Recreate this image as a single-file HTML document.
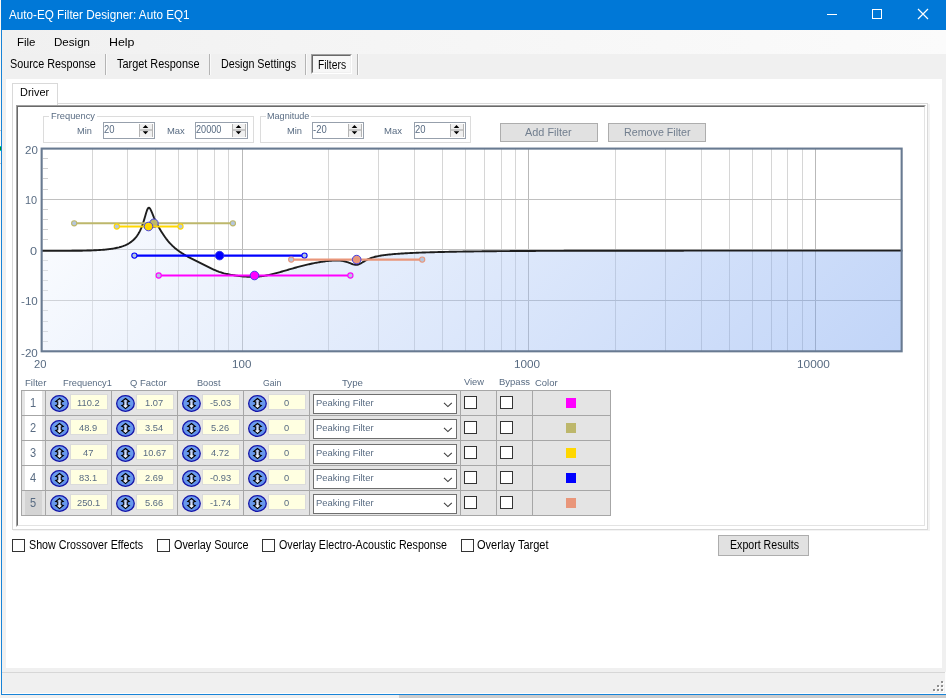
<!DOCTYPE html>
<html><head><meta charset='utf-8'><title>Auto-EQ Filter Designer</title>
<style>
html,body{margin:0;padding:0;width:946px;height:698px;overflow:hidden;background:#f0f0f0;font-family:"Liberation Sans", sans-serif;}
.abs{position:absolute;}
.t{position:absolute;white-space:nowrap;line-height:1;transform-origin:0 0;}
</style></head><body>
<svg width='0' height='0' style='position:absolute'><defs>
<linearGradient id='arw' x1='0' y1='0' x2='0' y2='1'><stop offset='0' stop-color='#9db8f2'/><stop offset='1' stop-color='#ffffff'/></linearGradient>
<linearGradient id='ball' x1='0' y1='0' x2='0' y2='1'><stop offset='0' stop-color='#6fa0f0'/><stop offset='1' stop-color='#5f8fe8'/></linearGradient>
<g id='spin'><ellipse cx='0' cy='0' rx='8.8' ry='7.9' fill='url(#ball)' stroke='#1414a8' stroke-width='1.3'/>
<path d='M0.05 -5.0 L3.8 -2.0 L1.8 -1.5 L1.8 1.4 L3.8 1.9 L0.05 5.1 L-3.7 1.9 L-1.7 1.4 L-1.7 -1.5 L-3.7 -2.0 Z' fill='url(#arw)' stroke='#000' stroke-width='1.1' stroke-linejoin='miter'/></g>
</defs></svg>

<!-- outside / window frame -->
<div class='abs' style='left:0;top:0;width:1px;height:695px;background:#fbf8f3'></div>
<div class='abs' style='left:0;top:146px;width:1px;height:5px;background:#00d8b0'></div><div class='abs' style='left:0;top:147px;width:1px;height:3px;background:#008a1e'></div><div class='abs' style='left:0;top:130px;width:1px;height:1px;background:#c4c4c4'></div><div class='abs' style='left:0;top:163px;width:1px;height:1px;background:#c4c4c4'></div>
<div class='abs' style='left:0;top:695px;width:399px;height:3px;background:#f0f0f0'></div>
<div class='abs' style='left:399px;top:695px;width:547px;height:3px;background:#cccccc'></div>
<div class='abs' style='left:1px;top:0;width:1px;height:695px;background:#1883d7'></div>
<div class='abs' style='left:1px;top:694px;width:945px;height:1px;background:#1883d7'></div>
<div class='abs' style='left:2px;top:693px;width:944px;height:1px;background:#fdfdfd'></div>
<!-- title bar -->
<div class='abs' style='left:1px;top:0;width:945px;height:30px;background:#0078d7'></div>
<div class='abs' style='left:827px;top:14px;width:10px;height:1px;background:#fff'></div>
<div class='abs' style='left:872px;top:9px;width:8px;height:8px;border:1px solid #fff'></div>
<svg class='abs' style='left:917px;top:8px' width='12' height='12' viewBox='0 0 12 12'><path d='M1 1 L11 11 M11 1 L1 11' stroke='#fff' stroke-width='1.2' fill='none'/></svg>
<!-- menu bar -->
<div class='abs' style='left:2px;top:30px;width:944px;height:24px;background:linear-gradient(to right,#f0f0f0 0%,#f4f4f4 30%,#fbfbfb 100%)'></div>
<!-- toolbar -->
<div class='abs' style='left:105px;top:54px;width:1px;height:21px;background:#b4b4b4'></div><div class='abs' style='left:106px;top:54px;width:1px;height:21px;background:#fafafa'></div>
<div class='abs' style='left:209px;top:54px;width:1px;height:21px;background:#b4b4b4'></div><div class='abs' style='left:210px;top:54px;width:1px;height:21px;background:#fafafa'></div>
<div class='abs' style='left:305px;top:54px;width:1px;height:21px;background:#b4b4b4'></div><div class='abs' style='left:306px;top:54px;width:1px;height:21px;background:#fafafa'></div>
<div class='abs' style='left:357px;top:54px;width:1px;height:21px;background:#b4b4b4'></div><div class='abs' style='left:358px;top:54px;width:1px;height:21px;background:#fafafa'></div>
<div class='abs' style='left:311px;top:54px;width:41px;height:20px;background:#f7f7f7;box-sizing:border-box;border-top:1px solid #a0a0a0;border-left:1px solid #a0a0a0;border-right:1px solid #fff;border-bottom:1px solid #fff'></div><div class='abs' style='left:312px;top:55px;width:39px;height:18px;box-sizing:border-box;border-top:1px solid #696969;border-left:1px solid #696969;border-right:1px solid #f0f0f0;border-bottom:1px solid #f0f0f0'></div>
<!-- white client -->
<div class='abs' style='left:6px;top:79px;width:936px;height:589px;background:#fff'></div>
<!-- tab page border -->
<div class='abs' style='left:13px;top:104px;width:915px;height:426px;border-right:2px solid #f3f3f3;border-bottom:1px solid #f3f3f3'></div><div class='abs' style='left:12px;top:103px;width:914px;height:425px;border:1px solid #d9d9d9'></div>
<div class='abs' style='left:12px;top:83px;width:44px;height:21px;background:#fff;border:1px solid #d9d9d9;border-bottom:none'></div>
<!-- inner sunken panel -->
<div class='abs' style='left:16px;top:105px;width:910px;height:422px;box-sizing:border-box;border-top:1px solid #a0a0a0;border-left:1px solid #a0a0a0;border-right:1px solid #fff;border-bottom:1px solid #fff'></div>
<div class='abs' style='left:17px;top:106px;width:908px;height:420px;box-sizing:border-box;border-top:1px solid #696969;border-left:1px solid #696969;border-right:1px solid #e3e3e3;border-bottom:1px solid #e3e3e3'></div>
<!-- group boxes -->
<div class='abs' style='left:43px;top:116px;width:209px;height:25px;border:1px solid #dcdcdc'></div>
<div class='abs' style='left:49px;top:112px;width:48px;height:10px;background:#fff'></div>
<div class='abs' style='left:260px;top:116px;width:209px;height:25px;border:1px solid #dcdcdc'></div>
<div class='abs' style='left:266px;top:112px;width:45px;height:10px;background:#fff'></div>
<div class='abs' style='left:103px;top:122px;width:50px;height:15px;background:#fff;border:1px solid #97a0ac'></div>
<div class='abs' style='left:139px;top:124px;width:14px;height:13px;background:#f0f0f0;border-left:1px solid #b4b4b4;border-right:1px solid #b4b4b4;box-sizing:border-box'></div>
<div class='abs' style='left:140px;top:129px;width:12px;height:2px;background:#c8c8c8'></div>
<svg class='abs' style='left:139px;top:124px' width='14' height='13' viewBox='0 0 14 13'><path d='M3.7 4 L9.3 4 L6.5 0.9 Z M3.7 7.2 L9.3 7.2 L6.5 10.2 Z' fill='#000'/></svg><div class='abs' style='left:195px;top:122px;width:51px;height:15px;background:#fff;border:1px solid #97a0ac'></div>
<div class='abs' style='left:232px;top:124px;width:14px;height:13px;background:#f0f0f0;border-left:1px solid #b4b4b4;border-right:1px solid #b4b4b4;box-sizing:border-box'></div>
<div class='abs' style='left:233px;top:129px;width:12px;height:2px;background:#c8c8c8'></div>
<svg class='abs' style='left:232px;top:124px' width='14' height='13' viewBox='0 0 14 13'><path d='M3.7 4 L9.3 4 L6.5 0.9 Z M3.7 7.2 L9.3 7.2 L6.5 10.2 Z' fill='#000'/></svg><div class='abs' style='left:312px;top:122px;width:50px;height:15px;background:#fff;border:1px solid #97a0ac'></div>
<div class='abs' style='left:348px;top:124px;width:14px;height:13px;background:#f0f0f0;border-left:1px solid #b4b4b4;border-right:1px solid #b4b4b4;box-sizing:border-box'></div>
<div class='abs' style='left:349px;top:129px;width:12px;height:2px;background:#c8c8c8'></div>
<svg class='abs' style='left:348px;top:124px' width='14' height='13' viewBox='0 0 14 13'><path d='M3.7 4 L9.3 4 L6.5 0.9 Z M3.7 7.2 L9.3 7.2 L6.5 10.2 Z' fill='#000'/></svg><div class='abs' style='left:414px;top:122px;width:50px;height:15px;background:#fff;border:1px solid #97a0ac'></div>
<div class='abs' style='left:450px;top:124px;width:14px;height:13px;background:#f0f0f0;border-left:1px solid #b4b4b4;border-right:1px solid #b4b4b4;box-sizing:border-box'></div>
<div class='abs' style='left:451px;top:129px;width:12px;height:2px;background:#c8c8c8'></div>
<svg class='abs' style='left:450px;top:124px' width='14' height='13' viewBox='0 0 14 13'><path d='M3.7 4 L9.3 4 L6.5 0.9 Z M3.7 7.2 L9.3 7.2 L6.5 10.2 Z' fill='#000'/></svg>
<!-- buttons -->
<div class='abs' style='left:500px;top:123px;width:96px;height:17px;background:#e1e1e1;border:1px solid #adadad'></div>
<div class='abs' style='left:608px;top:123px;width:96px;height:17px;background:#e1e1e1;border:1px solid #adadad'></div>
<svg class='abs' style='left:0;top:0' width='946' height='698' viewBox='0 0 946 698'>
<defs><linearGradient id='ag' gradientUnits='userSpaceOnUse' x1='41.65' y1='149.0' x2='572.85' y2='680.2'>
<stop offset='0' stop-color='#ffffff' stop-opacity='0.4'/><stop offset='1' stop-color='#6495ed' stop-opacity='0.4'/></linearGradient></defs>
<rect x='41.65' y='149.0' width='860.4' height='202.0' fill='#fff'/>
<line x1='92.5' y1='149.0' x2='92.5' y2='351.0' stroke='#d6d6d6' stroke-width='1'/><line x1='127.5' y1='149.0' x2='127.5' y2='351.0' stroke='#d6d6d6' stroke-width='1'/><line x1='155.5' y1='149.0' x2='155.5' y2='351.0' stroke='#d6d6d6' stroke-width='1'/><line x1='178.5' y1='149.0' x2='178.5' y2='351.0' stroke='#d6d6d6' stroke-width='1'/><line x1='197.5' y1='149.0' x2='197.5' y2='351.0' stroke='#d6d6d6' stroke-width='1'/><line x1='214.5' y1='149.0' x2='214.5' y2='351.0' stroke='#d6d6d6' stroke-width='1'/><line x1='228.5' y1='149.0' x2='228.5' y2='351.0' stroke='#d6d6d6' stroke-width='1'/><line x1='242.5' y1='149.0' x2='242.5' y2='351.0' stroke='#b9b9b9' stroke-width='1'/><line x1='328.5' y1='149.0' x2='328.5' y2='351.0' stroke='#d6d6d6' stroke-width='1'/><line x1='378.5' y1='149.0' x2='378.5' y2='351.0' stroke='#d6d6d6' stroke-width='1'/><line x1='414.5' y1='149.0' x2='414.5' y2='351.0' stroke='#d6d6d6' stroke-width='1'/><line x1='442.5' y1='149.0' x2='442.5' y2='351.0' stroke='#d6d6d6' stroke-width='1'/><line x1='465.5' y1='149.0' x2='465.5' y2='351.0' stroke='#d6d6d6' stroke-width='1'/><line x1='484.5' y1='149.0' x2='484.5' y2='351.0' stroke='#d6d6d6' stroke-width='1'/><line x1='501.5' y1='149.0' x2='501.5' y2='351.0' stroke='#d6d6d6' stroke-width='1'/><line x1='515.5' y1='149.0' x2='515.5' y2='351.0' stroke='#d6d6d6' stroke-width='1'/><line x1='528.5' y1='149.0' x2='528.5' y2='351.0' stroke='#b9b9b9' stroke-width='1'/><line x1='615.5' y1='149.0' x2='615.5' y2='351.0' stroke='#d6d6d6' stroke-width='1'/><line x1='665.5' y1='149.0' x2='665.5' y2='351.0' stroke='#d6d6d6' stroke-width='1'/><line x1='701.5' y1='149.0' x2='701.5' y2='351.0' stroke='#d6d6d6' stroke-width='1'/><line x1='729.5' y1='149.0' x2='729.5' y2='351.0' stroke='#d6d6d6' stroke-width='1'/><line x1='752.5' y1='149.0' x2='752.5' y2='351.0' stroke='#d6d6d6' stroke-width='1'/><line x1='771.5' y1='149.0' x2='771.5' y2='351.0' stroke='#d6d6d6' stroke-width='1'/><line x1='787.5' y1='149.0' x2='787.5' y2='351.0' stroke='#d6d6d6' stroke-width='1'/><line x1='802.5' y1='149.0' x2='802.5' y2='351.0' stroke='#d6d6d6' stroke-width='1'/><line x1='815.5' y1='149.0' x2='815.5' y2='351.0' stroke='#b9b9b9' stroke-width='1'/><line x1='41.65' y1='199.5' x2='902.05' y2='199.5' stroke='#c0c0c0' stroke-width='1'/><line x1='41.65' y1='249.5' x2='902.05' y2='249.5' stroke='#c0c0c0' stroke-width='1'/><line x1='41.65' y1='300.5' x2='902.05' y2='300.5' stroke='#c0c0c0' stroke-width='1'/><line x1='43' y1='158.5' x2='48' y2='158.5' stroke='#d0d0d0' stroke-width='1'/><line x1='43' y1='168.5' x2='48' y2='168.5' stroke='#d0d0d0' stroke-width='1'/><line x1='43' y1='178.5' x2='48' y2='178.5' stroke='#d0d0d0' stroke-width='1'/><line x1='43' y1='189.5' x2='48' y2='189.5' stroke='#d0d0d0' stroke-width='1'/><line x1='43' y1='209.5' x2='48' y2='209.5' stroke='#d0d0d0' stroke-width='1'/><line x1='43' y1='219.5' x2='48' y2='219.5' stroke='#d0d0d0' stroke-width='1'/><line x1='43' y1='229.5' x2='48' y2='229.5' stroke='#d0d0d0' stroke-width='1'/><line x1='43' y1='239.5' x2='48' y2='239.5' stroke='#d0d0d0' stroke-width='1'/><line x1='43' y1='260.5' x2='48' y2='260.5' stroke='#d0d0d0' stroke-width='1'/><line x1='43' y1='270.5' x2='48' y2='270.5' stroke='#d0d0d0' stroke-width='1'/><line x1='43' y1='280.5' x2='48' y2='280.5' stroke='#d0d0d0' stroke-width='1'/><line x1='43' y1='290.5' x2='48' y2='290.5' stroke='#d0d0d0' stroke-width='1'/><line x1='43' y1='310.5' x2='48' y2='310.5' stroke='#d0d0d0' stroke-width='1'/><line x1='43' y1='321.5' x2='48' y2='321.5' stroke='#d0d0d0' stroke-width='1'/><line x1='43' y1='331.5' x2='48' y2='331.5' stroke='#d0d0d0' stroke-width='1'/><line x1='43' y1='341.5' x2='48' y2='341.5' stroke='#d0d0d0' stroke-width='1'/>
<path d='M42.0,250.90 L43.1,250.90 L44.1,250.90 L45.1,250.90 L46.1,250.90 L47.1,250.90 L48.1,250.90 L49.1,250.90 L50.1,250.90 L51.1,250.90 L52.1,250.90 L53.1,250.90 L54.1,250.90 L55.1,250.90 L56.1,250.90 L57.1,250.90 L58.1,250.89 L59.1,250.89 L60.1,250.89 L61.1,250.89 L62.1,250.88 L63.1,250.88 L64.1,250.87 L65.1,250.87 L66.1,250.86 L67.1,250.86 L68.1,250.85 L69.1,250.84 L70.1,250.84 L71.1,250.83 L72.1,250.82 L73.1,250.81 L74.1,250.80 L75.1,250.79 L76.1,250.77 L77.1,250.76 L78.1,250.75 L79.1,250.73 L80.1,250.72 L81.1,250.70 L82.1,250.68 L83.1,250.66 L84.1,250.64 L85.1,250.61 L86.1,250.59 L87.1,250.56 L88.1,250.53 L89.1,250.50 L90.1,250.47 L91.1,250.43 L92.1,250.40 L93.1,250.36 L94.1,250.31 L95.1,250.27 L96.1,250.22 L97.1,250.16 L98.1,250.11 L99.1,250.05 L100.1,249.98 L101.1,249.91 L102.1,249.84 L103.1,249.76 L104.1,249.68 L105.1,249.58 L106.1,249.49 L107.1,249.38 L108.1,249.27 L109.1,249.15 L110.1,249.02 L111.1,248.88 L112.1,248.73 L113.1,248.57 L114.1,248.40 L115.1,248.21 L116.1,248.01 L117.1,247.79 L118.1,247.56 L119.1,247.31 L120.1,247.03 L121.1,246.74 L122.1,246.42 L123.1,246.07 L124.1,245.69 L125.1,245.28 L126.1,244.83 L127.1,244.34 L128.1,243.81 L129.1,243.23 L130.1,242.59 L131.1,241.88 L132.1,241.11 L133.1,240.25 L134.1,239.31 L135.1,238.25 L136.1,237.07 L137.1,235.75 L138.1,234.26 L139.1,232.57 L140.1,230.65 L141.1,228.45 L142.1,225.93 L143.1,223.07 L144.1,219.87 L145.1,216.43 L146.1,212.98 L147.1,210.00 L148.1,208.06 L149.1,207.61 L150.1,208.60 L151.1,210.56 L152.1,212.97 L153.1,215.46 L154.1,217.84 L155.1,220.07 L156.1,222.16 L157.1,224.12 L158.1,225.98 L159.1,227.77 L160.1,229.49 L161.1,231.15 L162.1,232.75 L163.1,234.30 L164.1,235.78 L165.1,237.20 L166.1,238.56 L167.1,239.85 L168.1,241.09 L169.1,242.26 L170.1,243.38 L171.1,244.44 L172.1,245.45 L173.1,246.41 L174.1,247.32 L175.1,248.19 L176.1,249.01 L177.1,249.81 L178.1,250.56 L179.1,251.29 L180.1,251.99 L181.1,252.66 L182.1,253.31 L183.1,253.93 L184.1,254.54 L185.1,255.13 L186.1,255.71 L187.1,256.27 L188.1,256.82 L189.1,257.36 L190.1,257.89 L191.1,258.41 L192.1,258.93 L193.1,259.45 L194.1,259.95 L195.1,260.46 L196.1,260.96 L197.1,261.46 L198.1,261.96 L199.1,262.46 L200.1,262.96 L201.1,263.46 L202.1,263.96 L203.1,264.46 L204.1,264.96 L205.1,265.46 L206.1,265.96 L207.1,266.46 L208.1,266.95 L209.1,267.44 L210.1,267.93 L211.1,268.41 L212.1,268.87 L213.1,269.33 L214.1,269.78 L215.1,270.21 L216.1,270.63 L217.1,271.03 L218.1,271.41 L219.1,271.78 L220.1,272.12 L221.1,272.45 L222.1,272.76 L223.1,273.04 L224.1,273.32 L225.1,273.57 L226.1,273.81 L227.1,274.03 L228.1,274.24 L229.1,274.44 L230.1,274.63 L231.1,274.81 L232.1,274.99 L233.1,275.15 L234.1,275.31 L235.1,275.46 L236.1,275.60 L237.1,275.74 L238.1,275.88 L239.1,276.00 L240.1,276.12 L241.1,276.23 L242.1,276.34 L243.1,276.44 L244.1,276.52 L245.1,276.60 L246.1,276.67 L247.1,276.73 L248.1,276.78 L249.1,276.82 L250.1,276.84 L251.1,276.85 L252.1,276.86 L253.1,276.84 L254.1,276.82 L255.1,276.78 L256.1,276.73 L257.1,276.66 L258.2,276.58 L259.2,276.49 L260.2,276.38 L261.2,276.26 L262.2,276.13 L263.2,275.99 L264.2,275.83 L265.2,275.66 L266.2,275.48 L267.2,275.29 L268.2,275.09 L269.2,274.88 L270.2,274.66 L271.2,274.43 L272.2,274.19 L273.2,273.94 L274.2,273.69 L275.2,273.43 L276.2,273.17 L277.2,272.90 L278.2,272.63 L279.2,272.35 L280.2,272.07 L281.2,271.78 L282.2,271.50 L283.2,271.21 L284.2,270.92 L285.2,270.63 L286.2,270.34 L287.2,270.05 L288.2,269.76 L289.2,269.46 L290.2,269.18 L291.2,268.89 L292.2,268.60 L293.2,268.32 L294.2,268.03 L295.2,267.75 L296.2,267.48 L297.2,267.20 L298.2,266.93 L299.2,266.66 L300.2,266.40 L301.2,266.14 L302.2,265.88 L303.2,265.63 L304.2,265.38 L305.2,265.13 L306.2,264.89 L307.2,264.66 L308.2,264.43 L309.2,264.20 L310.2,263.98 L311.2,263.76 L312.2,263.55 L313.2,263.34 L314.2,263.14 L315.2,262.94 L316.2,262.75 L317.2,262.57 L318.2,262.39 L319.2,262.21 L320.2,262.05 L321.2,261.88 L322.2,261.73 L323.2,261.58 L324.2,261.44 L325.2,261.31 L326.2,261.18 L327.2,261.07 L328.2,260.96 L329.2,260.86 L330.2,260.77 L331.2,260.69 L332.2,260.63 L333.2,260.57 L334.2,260.53 L335.2,260.51 L336.2,260.50 L337.2,260.51 L338.2,260.54 L339.2,260.59 L340.2,260.67 L341.2,260.77 L342.2,260.90 L343.2,261.07 L344.2,261.27 L345.2,261.51 L346.2,261.78 L347.2,262.10 L348.2,262.45 L349.2,262.83 L350.2,263.23 L351.2,263.63 L352.2,264.02 L353.2,264.37 L354.2,264.64 L355.2,264.81 L356.2,264.85 L357.2,264.75 L358.2,264.51 L359.2,264.14 L360.2,263.67 L361.2,263.12 L362.2,262.54 L363.2,261.93 L364.2,261.33 L365.2,260.75 L366.2,260.20 L367.2,259.68 L368.2,259.20 L369.2,258.76 L370.2,258.35 L371.2,257.98 L372.2,257.64 L373.2,257.33 L374.2,257.04 L375.2,256.78 L376.2,256.54 L377.2,256.31 L378.2,256.10 L379.2,255.91 L380.2,255.73 L381.2,255.56 L382.2,255.41 L383.2,255.26 L384.2,255.12 L385.2,254.99 L386.2,254.87 L387.2,254.75 L388.2,254.64 L389.2,254.53 L390.2,254.43 L391.2,254.33 L392.2,254.24 L393.2,254.15 L394.2,254.07 L395.2,253.99 L396.2,253.91 L397.2,253.84 L398.2,253.76 L399.2,253.70 L400.2,253.63 L401.2,253.56 L402.2,253.50 L403.2,253.44 L404.2,253.38 L405.2,253.32 L406.2,253.27 L407.2,253.21 L408.2,253.16 L409.2,253.11 L410.2,253.06 L411.2,253.01 L412.2,252.97 L413.2,252.92 L414.2,252.88 L415.2,252.83 L416.2,252.79 L417.2,252.75 L418.2,252.71 L419.2,252.67 L420.2,252.63 L421.2,252.60 L422.2,252.56 L423.2,252.52 L424.2,252.49 L425.2,252.46 L426.2,252.42 L427.2,252.39 L428.2,252.36 L429.2,252.33 L430.2,252.30 L431.2,252.27 L432.2,252.24 L433.2,252.21 L434.2,252.18 L435.2,252.15 L436.2,252.13 L437.2,252.10 L438.2,252.07 L439.2,252.05 L440.2,252.02 L441.2,252.00 L442.2,251.98 L443.2,251.95 L444.2,251.93 L445.2,251.91 L446.2,251.89 L447.2,251.86 L448.2,251.84 L449.2,251.82 L450.2,251.80 L451.2,251.78 L452.2,251.76 L453.2,251.74 L454.2,251.73 L455.2,251.71 L456.2,251.69 L457.2,251.67 L458.2,251.65 L459.2,251.64 L460.2,251.62 L461.2,251.60 L462.2,251.59 L463.2,251.57 L464.2,251.56 L465.2,251.54 L466.2,251.52 L467.2,251.51 L468.2,251.50 L469.2,251.48 L470.2,251.47 L471.2,251.45 L472.2,251.44 L473.3,251.43 L474.3,251.41 L475.3,251.40 L476.3,251.39 L477.3,251.38 L478.3,251.36 L479.3,251.35 L480.3,251.34 L481.3,251.33 L482.3,251.32 L483.3,251.31 L484.3,251.30 L485.3,251.28 L486.3,251.27 L487.3,251.26 L488.3,251.25 L489.3,251.24 L490.3,251.23 L491.3,251.22 L492.3,251.21 L493.3,251.21 L494.3,251.20 L495.3,251.19 L496.3,251.18 L497.3,251.17 L498.3,251.16 L499.3,251.15 L500.3,251.14 L501.3,251.14 L502.3,251.13 L503.3,251.12 L504.3,251.11 L505.3,251.11 L506.3,251.10 L507.3,251.09 L508.3,251.08 L509.3,251.08 L510.3,251.07 L511.3,251.06 L512.3,251.06 L513.3,251.05 L514.3,251.04 L515.3,251.04 L516.3,251.03 L517.3,251.02 L518.3,251.02 L519.3,251.01 L520.3,251.01 L521.3,251.00 L522.3,250.99 L523.3,250.99 L524.3,250.98 L525.3,250.98 L526.3,250.97 L527.3,250.97 L528.3,250.96 L529.3,250.96 L530.3,250.95 L531.3,250.95 L532.3,250.94 L533.3,250.94 L534.3,250.93 L535.3,250.93 L536.3,250.92 L537.3,250.92 L538.3,250.91 L539.3,250.91 L540.3,250.91 L541.3,250.90 L542.3,250.90 L543.3,250.89 L544.3,250.89 L545.3,250.89 L546.3,250.88 L547.3,250.88 L548.3,250.87 L549.3,250.87 L550.3,250.87 L551.3,250.86 L552.3,250.86 L553.3,250.86 L554.3,250.85 L555.3,250.85 L556.3,250.85 L557.3,250.84 L558.3,250.84 L559.3,250.84 L560.3,250.83 L561.3,250.83 L562.3,250.83 L563.3,250.83 L564.3,250.82 L565.3,250.82 L566.3,250.82 L567.3,250.82 L568.3,250.81 L569.3,250.81 L570.3,250.81 L571.3,250.80 L572.3,250.80 L573.3,250.80 L574.3,250.80 L575.3,250.79 L576.3,250.79 L577.3,250.79 L578.3,250.79 L579.3,250.79 L580.3,250.78 L581.3,250.78 L582.3,250.78 L583.3,250.78 L584.3,250.78 L585.3,250.77 L586.3,250.77 L587.3,250.77 L588.3,250.77 L589.3,250.77 L590.3,250.76 L591.3,250.76 L592.3,250.76 L593.3,250.76 L594.3,250.76 L595.3,250.75 L596.3,250.75 L597.3,250.75 L598.3,250.75 L599.3,250.75 L600.3,250.75 L601.3,250.75 L602.3,250.74 L603.3,250.74 L604.3,250.74 L605.3,250.74 L606.3,250.74 L607.3,250.74 L608.3,250.73 L609.3,250.73 L610.3,250.73 L611.3,250.73 L612.3,250.73 L613.3,250.73 L614.3,250.73 L615.3,250.73 L616.3,250.72 L617.3,250.72 L618.3,250.72 L619.3,250.72 L620.3,250.72 L621.3,250.72 L622.3,250.72 L623.3,250.72 L624.3,250.72 L625.3,250.71 L626.3,250.71 L627.3,250.71 L628.3,250.71 L629.3,250.71 L630.3,250.71 L631.3,250.71 L632.3,250.71 L633.3,250.71 L634.3,250.71 L635.3,250.70 L636.3,250.70 L637.3,250.70 L638.3,250.70 L639.3,250.70 L640.3,250.70 L641.3,250.70 L642.3,250.70 L643.3,250.70 L644.3,250.70 L645.3,250.70 L646.3,250.70 L647.3,250.70 L648.3,250.69 L649.3,250.69 L650.3,250.69 L651.3,250.69 L652.3,250.69 L653.3,250.69 L654.3,250.69 L655.3,250.69 L656.3,250.69 L657.3,250.69 L658.3,250.69 L659.3,250.69 L660.3,250.69 L661.3,250.69 L662.3,250.69 L663.3,250.69 L664.3,250.68 L665.3,250.68 L666.3,250.68 L667.3,250.68 L668.3,250.68 L669.3,250.68 L670.3,250.68 L671.3,250.68 L672.3,250.68 L673.3,250.68 L674.3,250.68 L675.3,250.68 L676.3,250.68 L677.3,250.68 L678.3,250.68 L679.3,250.68 L680.3,250.68 L681.3,250.68 L682.3,250.68 L683.3,250.68 L684.3,250.67 L685.3,250.67 L686.3,250.67 L687.3,250.67 L688.4,250.67 L689.4,250.67 L690.4,250.67 L691.4,250.67 L692.4,250.67 L693.4,250.67 L694.4,250.67 L695.4,250.67 L696.4,250.67 L697.4,250.67 L698.4,250.67 L699.4,250.67 L700.4,250.67 L701.4,250.67 L702.4,250.67 L703.4,250.67 L704.4,250.67 L705.4,250.67 L706.4,250.67 L707.4,250.67 L708.4,250.67 L709.4,250.67 L710.4,250.67 L711.4,250.67 L712.4,250.67 L713.4,250.67 L714.4,250.67 L715.4,250.67 L716.4,250.66 L717.4,250.66 L718.4,250.66 L719.4,250.66 L720.4,250.66 L721.4,250.66 L722.4,250.66 L723.4,250.66 L724.4,250.66 L725.4,250.66 L726.4,250.66 L727.4,250.66 L728.4,250.66 L729.4,250.66 L730.4,250.66 L731.4,250.66 L732.4,250.66 L733.4,250.66 L734.4,250.66 L735.4,250.66 L736.4,250.66 L737.4,250.66 L738.4,250.66 L739.4,250.66 L740.4,250.66 L741.4,250.66 L742.4,250.66 L743.4,250.66 L744.4,250.66 L745.4,250.66 L746.4,250.66 L747.4,250.66 L748.4,250.66 L749.4,250.66 L750.4,250.66 L751.4,250.66 L752.4,250.66 L753.4,250.66 L754.4,250.66 L755.4,250.66 L756.4,250.66 L757.4,250.66 L758.4,250.66 L759.4,250.66 L760.4,250.66 L761.4,250.66 L762.4,250.66 L763.4,250.66 L764.4,250.66 L765.4,250.66 L766.4,250.66 L767.4,250.66 L768.4,250.66 L769.4,250.66 L770.4,250.66 L771.4,250.66 L772.4,250.66 L773.4,250.66 L774.4,250.66 L775.4,250.66 L776.4,250.66 L777.4,250.66 L778.4,250.66 L779.4,250.66 L780.4,250.66 L781.4,250.66 L782.4,250.66 L783.4,250.66 L784.4,250.66 L785.4,250.65 L786.4,250.65 L787.4,250.65 L788.4,250.65 L789.4,250.65 L790.4,250.65 L791.4,250.65 L792.4,250.65 L793.4,250.65 L794.4,250.65 L795.4,250.65 L796.4,250.65 L797.4,250.65 L798.4,250.65 L799.4,250.65 L800.4,250.65 L801.4,250.65 L802.4,250.65 L803.4,250.65 L804.4,250.65 L805.4,250.65 L806.4,250.65 L807.4,250.65 L808.4,250.65 L809.4,250.65 L810.4,250.65 L811.4,250.65 L812.4,250.65 L813.4,250.65 L814.4,250.65 L815.4,250.65 L816.4,250.65 L817.4,250.65 L818.4,250.65 L819.4,250.65 L820.4,250.65 L821.4,250.65 L822.4,250.65 L823.4,250.65 L824.4,250.65 L825.4,250.65 L826.4,250.65 L827.4,250.65 L828.4,250.65 L829.4,250.65 L830.4,250.65 L831.4,250.65 L832.4,250.65 L833.4,250.65 L834.4,250.65 L835.4,250.65 L836.4,250.65 L837.4,250.65 L838.4,250.65 L839.4,250.65 L840.4,250.65 L841.4,250.65 L842.4,250.65 L843.4,250.65 L844.4,250.65 L845.4,250.65 L846.4,250.65 L847.4,250.65 L848.4,250.65 L849.4,250.65 L850.4,250.65 L851.4,250.65 L852.4,250.65 L853.4,250.65 L854.4,250.65 L855.4,250.65 L856.4,250.65 L857.4,250.65 L858.4,250.65 L859.4,250.65 L860.4,250.65 L861.4,250.65 L862.4,250.65 L863.4,250.65 L864.4,250.65 L865.4,250.65 L866.4,250.65 L867.4,250.65 L868.4,250.65 L869.4,250.65 L870.4,250.65 L871.4,250.65 L872.4,250.65 L873.4,250.65 L874.4,250.65 L875.4,250.65 L876.4,250.65 L877.4,250.65 L878.4,250.65 L879.4,250.65 L880.4,250.65 L881.4,250.65 L882.4,250.65 L883.4,250.65 L884.4,250.65 L885.4,250.65 L886.4,250.65 L887.4,250.65 L888.4,250.65 L889.4,250.65 L890.4,250.65 L891.4,250.65 L892.4,250.65 L893.4,250.65 L894.4,250.65 L895.4,250.65 L896.4,250.65 L897.4,250.65 L898.4,250.65 L899.4,250.65 L900.4,250.65 L901.4,250.65 L902.4,250.65 L902.05,351.0 L41.65,351.0 Z' fill='url(#ag)'/>
<path d='M42.0,250.90 L43.1,250.90 L44.1,250.90 L45.1,250.90 L46.1,250.90 L47.1,250.90 L48.1,250.90 L49.1,250.90 L50.1,250.90 L51.1,250.90 L52.1,250.90 L53.1,250.90 L54.1,250.90 L55.1,250.90 L56.1,250.90 L57.1,250.90 L58.1,250.89 L59.1,250.89 L60.1,250.89 L61.1,250.89 L62.1,250.88 L63.1,250.88 L64.1,250.87 L65.1,250.87 L66.1,250.86 L67.1,250.86 L68.1,250.85 L69.1,250.84 L70.1,250.84 L71.1,250.83 L72.1,250.82 L73.1,250.81 L74.1,250.80 L75.1,250.79 L76.1,250.77 L77.1,250.76 L78.1,250.75 L79.1,250.73 L80.1,250.72 L81.1,250.70 L82.1,250.68 L83.1,250.66 L84.1,250.64 L85.1,250.61 L86.1,250.59 L87.1,250.56 L88.1,250.53 L89.1,250.50 L90.1,250.47 L91.1,250.43 L92.1,250.40 L93.1,250.36 L94.1,250.31 L95.1,250.27 L96.1,250.22 L97.1,250.16 L98.1,250.11 L99.1,250.05 L100.1,249.98 L101.1,249.91 L102.1,249.84 L103.1,249.76 L104.1,249.68 L105.1,249.58 L106.1,249.49 L107.1,249.38 L108.1,249.27 L109.1,249.15 L110.1,249.02 L111.1,248.88 L112.1,248.73 L113.1,248.57 L114.1,248.40 L115.1,248.21 L116.1,248.01 L117.1,247.79 L118.1,247.56 L119.1,247.31 L120.1,247.03 L121.1,246.74 L122.1,246.42 L123.1,246.07 L124.1,245.69 L125.1,245.28 L126.1,244.83 L127.1,244.34 L128.1,243.81 L129.1,243.23 L130.1,242.59 L131.1,241.88 L132.1,241.11 L133.1,240.25 L134.1,239.31 L135.1,238.25 L136.1,237.07 L137.1,235.75 L138.1,234.26 L139.1,232.57 L140.1,230.65 L141.1,228.45 L142.1,225.93 L143.1,223.07 L144.1,219.87 L145.1,216.43 L146.1,212.98 L147.1,210.00 L148.1,208.06 L149.1,207.61 L150.1,208.60 L151.1,210.56 L152.1,212.97 L153.1,215.46 L154.1,217.84 L155.1,220.07 L156.1,222.16 L157.1,224.12 L158.1,225.98 L159.1,227.77 L160.1,229.49 L161.1,231.15 L162.1,232.75 L163.1,234.30 L164.1,235.78 L165.1,237.20 L166.1,238.56 L167.1,239.85 L168.1,241.09 L169.1,242.26 L170.1,243.38 L171.1,244.44 L172.1,245.45 L173.1,246.41 L174.1,247.32 L175.1,248.19 L176.1,249.01 L177.1,249.81 L178.1,250.56 L179.1,251.29 L180.1,251.99 L181.1,252.66 L182.1,253.31 L183.1,253.93 L184.1,254.54 L185.1,255.13 L186.1,255.71 L187.1,256.27 L188.1,256.82 L189.1,257.36 L190.1,257.89 L191.1,258.41 L192.1,258.93 L193.1,259.45 L194.1,259.95 L195.1,260.46 L196.1,260.96 L197.1,261.46 L198.1,261.96 L199.1,262.46 L200.1,262.96 L201.1,263.46 L202.1,263.96 L203.1,264.46 L204.1,264.96 L205.1,265.46 L206.1,265.96 L207.1,266.46 L208.1,266.95 L209.1,267.44 L210.1,267.93 L211.1,268.41 L212.1,268.87 L213.1,269.33 L214.1,269.78 L215.1,270.21 L216.1,270.63 L217.1,271.03 L218.1,271.41 L219.1,271.78 L220.1,272.12 L221.1,272.45 L222.1,272.76 L223.1,273.04 L224.1,273.32 L225.1,273.57 L226.1,273.81 L227.1,274.03 L228.1,274.24 L229.1,274.44 L230.1,274.63 L231.1,274.81 L232.1,274.99 L233.1,275.15 L234.1,275.31 L235.1,275.46 L236.1,275.60 L237.1,275.74 L238.1,275.88 L239.1,276.00 L240.1,276.12 L241.1,276.23 L242.1,276.34 L243.1,276.44 L244.1,276.52 L245.1,276.60 L246.1,276.67 L247.1,276.73 L248.1,276.78 L249.1,276.82 L250.1,276.84 L251.1,276.85 L252.1,276.86 L253.1,276.84 L254.1,276.82 L255.1,276.78 L256.1,276.73 L257.1,276.66 L258.2,276.58 L259.2,276.49 L260.2,276.38 L261.2,276.26 L262.2,276.13 L263.2,275.99 L264.2,275.83 L265.2,275.66 L266.2,275.48 L267.2,275.29 L268.2,275.09 L269.2,274.88 L270.2,274.66 L271.2,274.43 L272.2,274.19 L273.2,273.94 L274.2,273.69 L275.2,273.43 L276.2,273.17 L277.2,272.90 L278.2,272.63 L279.2,272.35 L280.2,272.07 L281.2,271.78 L282.2,271.50 L283.2,271.21 L284.2,270.92 L285.2,270.63 L286.2,270.34 L287.2,270.05 L288.2,269.76 L289.2,269.46 L290.2,269.18 L291.2,268.89 L292.2,268.60 L293.2,268.32 L294.2,268.03 L295.2,267.75 L296.2,267.48 L297.2,267.20 L298.2,266.93 L299.2,266.66 L300.2,266.40 L301.2,266.14 L302.2,265.88 L303.2,265.63 L304.2,265.38 L305.2,265.13 L306.2,264.89 L307.2,264.66 L308.2,264.43 L309.2,264.20 L310.2,263.98 L311.2,263.76 L312.2,263.55 L313.2,263.34 L314.2,263.14 L315.2,262.94 L316.2,262.75 L317.2,262.57 L318.2,262.39 L319.2,262.21 L320.2,262.05 L321.2,261.88 L322.2,261.73 L323.2,261.58 L324.2,261.44 L325.2,261.31 L326.2,261.18 L327.2,261.07 L328.2,260.96 L329.2,260.86 L330.2,260.77 L331.2,260.69 L332.2,260.63 L333.2,260.57 L334.2,260.53 L335.2,260.51 L336.2,260.50 L337.2,260.51 L338.2,260.54 L339.2,260.59 L340.2,260.67 L341.2,260.77 L342.2,260.90 L343.2,261.07 L344.2,261.27 L345.2,261.51 L346.2,261.78 L347.2,262.10 L348.2,262.45 L349.2,262.83 L350.2,263.23 L351.2,263.63 L352.2,264.02 L353.2,264.37 L354.2,264.64 L355.2,264.81 L356.2,264.85 L357.2,264.75 L358.2,264.51 L359.2,264.14 L360.2,263.67 L361.2,263.12 L362.2,262.54 L363.2,261.93 L364.2,261.33 L365.2,260.75 L366.2,260.20 L367.2,259.68 L368.2,259.20 L369.2,258.76 L370.2,258.35 L371.2,257.98 L372.2,257.64 L373.2,257.33 L374.2,257.04 L375.2,256.78 L376.2,256.54 L377.2,256.31 L378.2,256.10 L379.2,255.91 L380.2,255.73 L381.2,255.56 L382.2,255.41 L383.2,255.26 L384.2,255.12 L385.2,254.99 L386.2,254.87 L387.2,254.75 L388.2,254.64 L389.2,254.53 L390.2,254.43 L391.2,254.33 L392.2,254.24 L393.2,254.15 L394.2,254.07 L395.2,253.99 L396.2,253.91 L397.2,253.84 L398.2,253.76 L399.2,253.70 L400.2,253.63 L401.2,253.56 L402.2,253.50 L403.2,253.44 L404.2,253.38 L405.2,253.32 L406.2,253.27 L407.2,253.21 L408.2,253.16 L409.2,253.11 L410.2,253.06 L411.2,253.01 L412.2,252.97 L413.2,252.92 L414.2,252.88 L415.2,252.83 L416.2,252.79 L417.2,252.75 L418.2,252.71 L419.2,252.67 L420.2,252.63 L421.2,252.60 L422.2,252.56 L423.2,252.52 L424.2,252.49 L425.2,252.46 L426.2,252.42 L427.2,252.39 L428.2,252.36 L429.2,252.33 L430.2,252.30 L431.2,252.27 L432.2,252.24 L433.2,252.21 L434.2,252.18 L435.2,252.15 L436.2,252.13 L437.2,252.10 L438.2,252.07 L439.2,252.05 L440.2,252.02 L441.2,252.00 L442.2,251.98 L443.2,251.95 L444.2,251.93 L445.2,251.91 L446.2,251.89 L447.2,251.86 L448.2,251.84 L449.2,251.82 L450.2,251.80 L451.2,251.78 L452.2,251.76 L453.2,251.74 L454.2,251.73 L455.2,251.71 L456.2,251.69 L457.2,251.67 L458.2,251.65 L459.2,251.64 L460.2,251.62 L461.2,251.60 L462.2,251.59 L463.2,251.57 L464.2,251.56 L465.2,251.54 L466.2,251.52 L467.2,251.51 L468.2,251.50 L469.2,251.48 L470.2,251.47 L471.2,251.45 L472.2,251.44 L473.3,251.43 L474.3,251.41 L475.3,251.40 L476.3,251.39 L477.3,251.38 L478.3,251.36 L479.3,251.35 L480.3,251.34 L481.3,251.33 L482.3,251.32 L483.3,251.31 L484.3,251.30 L485.3,251.28 L486.3,251.27 L487.3,251.26 L488.3,251.25 L489.3,251.24 L490.3,251.23 L491.3,251.22 L492.3,251.21 L493.3,251.21 L494.3,251.20 L495.3,251.19 L496.3,251.18 L497.3,251.17 L498.3,251.16 L499.3,251.15 L500.3,251.14 L501.3,251.14 L502.3,251.13 L503.3,251.12 L504.3,251.11 L505.3,251.11 L506.3,251.10 L507.3,251.09 L508.3,251.08 L509.3,251.08 L510.3,251.07 L511.3,251.06 L512.3,251.06 L513.3,251.05 L514.3,251.04 L515.3,251.04 L516.3,251.03 L517.3,251.02 L518.3,251.02 L519.3,251.01 L520.3,251.01 L521.3,251.00 L522.3,250.99 L523.3,250.99 L524.3,250.98 L525.3,250.98 L526.3,250.97 L527.3,250.97 L528.3,250.96 L529.3,250.96 L530.3,250.95 L531.3,250.95 L532.3,250.94 L533.3,250.94 L534.3,250.93 L535.3,250.93 L536.3,250.92 L537.3,250.92 L538.3,250.91 L539.3,250.91 L540.3,250.91 L541.3,250.90 L542.3,250.90 L543.3,250.89 L544.3,250.89 L545.3,250.89 L546.3,250.88 L547.3,250.88 L548.3,250.87 L549.3,250.87 L550.3,250.87 L551.3,250.86 L552.3,250.86 L553.3,250.86 L554.3,250.85 L555.3,250.85 L556.3,250.85 L557.3,250.84 L558.3,250.84 L559.3,250.84 L560.3,250.83 L561.3,250.83 L562.3,250.83 L563.3,250.83 L564.3,250.82 L565.3,250.82 L566.3,250.82 L567.3,250.82 L568.3,250.81 L569.3,250.81 L570.3,250.81 L571.3,250.80 L572.3,250.80 L573.3,250.80 L574.3,250.80 L575.3,250.79 L576.3,250.79 L577.3,250.79 L578.3,250.79 L579.3,250.79 L580.3,250.78 L581.3,250.78 L582.3,250.78 L583.3,250.78 L584.3,250.78 L585.3,250.77 L586.3,250.77 L587.3,250.77 L588.3,250.77 L589.3,250.77 L590.3,250.76 L591.3,250.76 L592.3,250.76 L593.3,250.76 L594.3,250.76 L595.3,250.75 L596.3,250.75 L597.3,250.75 L598.3,250.75 L599.3,250.75 L600.3,250.75 L601.3,250.75 L602.3,250.74 L603.3,250.74 L604.3,250.74 L605.3,250.74 L606.3,250.74 L607.3,250.74 L608.3,250.73 L609.3,250.73 L610.3,250.73 L611.3,250.73 L612.3,250.73 L613.3,250.73 L614.3,250.73 L615.3,250.73 L616.3,250.72 L617.3,250.72 L618.3,250.72 L619.3,250.72 L620.3,250.72 L621.3,250.72 L622.3,250.72 L623.3,250.72 L624.3,250.72 L625.3,250.71 L626.3,250.71 L627.3,250.71 L628.3,250.71 L629.3,250.71 L630.3,250.71 L631.3,250.71 L632.3,250.71 L633.3,250.71 L634.3,250.71 L635.3,250.70 L636.3,250.70 L637.3,250.70 L638.3,250.70 L639.3,250.70 L640.3,250.70 L641.3,250.70 L642.3,250.70 L643.3,250.70 L644.3,250.70 L645.3,250.70 L646.3,250.70 L647.3,250.70 L648.3,250.69 L649.3,250.69 L650.3,250.69 L651.3,250.69 L652.3,250.69 L653.3,250.69 L654.3,250.69 L655.3,250.69 L656.3,250.69 L657.3,250.69 L658.3,250.69 L659.3,250.69 L660.3,250.69 L661.3,250.69 L662.3,250.69 L663.3,250.69 L664.3,250.68 L665.3,250.68 L666.3,250.68 L667.3,250.68 L668.3,250.68 L669.3,250.68 L670.3,250.68 L671.3,250.68 L672.3,250.68 L673.3,250.68 L674.3,250.68 L675.3,250.68 L676.3,250.68 L677.3,250.68 L678.3,250.68 L679.3,250.68 L680.3,250.68 L681.3,250.68 L682.3,250.68 L683.3,250.68 L684.3,250.67 L685.3,250.67 L686.3,250.67 L687.3,250.67 L688.4,250.67 L689.4,250.67 L690.4,250.67 L691.4,250.67 L692.4,250.67 L693.4,250.67 L694.4,250.67 L695.4,250.67 L696.4,250.67 L697.4,250.67 L698.4,250.67 L699.4,250.67 L700.4,250.67 L701.4,250.67 L702.4,250.67 L703.4,250.67 L704.4,250.67 L705.4,250.67 L706.4,250.67 L707.4,250.67 L708.4,250.67 L709.4,250.67 L710.4,250.67 L711.4,250.67 L712.4,250.67 L713.4,250.67 L714.4,250.67 L715.4,250.67 L716.4,250.66 L717.4,250.66 L718.4,250.66 L719.4,250.66 L720.4,250.66 L721.4,250.66 L722.4,250.66 L723.4,250.66 L724.4,250.66 L725.4,250.66 L726.4,250.66 L727.4,250.66 L728.4,250.66 L729.4,250.66 L730.4,250.66 L731.4,250.66 L732.4,250.66 L733.4,250.66 L734.4,250.66 L735.4,250.66 L736.4,250.66 L737.4,250.66 L738.4,250.66 L739.4,250.66 L740.4,250.66 L741.4,250.66 L742.4,250.66 L743.4,250.66 L744.4,250.66 L745.4,250.66 L746.4,250.66 L747.4,250.66 L748.4,250.66 L749.4,250.66 L750.4,250.66 L751.4,250.66 L752.4,250.66 L753.4,250.66 L754.4,250.66 L755.4,250.66 L756.4,250.66 L757.4,250.66 L758.4,250.66 L759.4,250.66 L760.4,250.66 L761.4,250.66 L762.4,250.66 L763.4,250.66 L764.4,250.66 L765.4,250.66 L766.4,250.66 L767.4,250.66 L768.4,250.66 L769.4,250.66 L770.4,250.66 L771.4,250.66 L772.4,250.66 L773.4,250.66 L774.4,250.66 L775.4,250.66 L776.4,250.66 L777.4,250.66 L778.4,250.66 L779.4,250.66 L780.4,250.66 L781.4,250.66 L782.4,250.66 L783.4,250.66 L784.4,250.66 L785.4,250.65 L786.4,250.65 L787.4,250.65 L788.4,250.65 L789.4,250.65 L790.4,250.65 L791.4,250.65 L792.4,250.65 L793.4,250.65 L794.4,250.65 L795.4,250.65 L796.4,250.65 L797.4,250.65 L798.4,250.65 L799.4,250.65 L800.4,250.65 L801.4,250.65 L802.4,250.65 L803.4,250.65 L804.4,250.65 L805.4,250.65 L806.4,250.65 L807.4,250.65 L808.4,250.65 L809.4,250.65 L810.4,250.65 L811.4,250.65 L812.4,250.65 L813.4,250.65 L814.4,250.65 L815.4,250.65 L816.4,250.65 L817.4,250.65 L818.4,250.65 L819.4,250.65 L820.4,250.65 L821.4,250.65 L822.4,250.65 L823.4,250.65 L824.4,250.65 L825.4,250.65 L826.4,250.65 L827.4,250.65 L828.4,250.65 L829.4,250.65 L830.4,250.65 L831.4,250.65 L832.4,250.65 L833.4,250.65 L834.4,250.65 L835.4,250.65 L836.4,250.65 L837.4,250.65 L838.4,250.65 L839.4,250.65 L840.4,250.65 L841.4,250.65 L842.4,250.65 L843.4,250.65 L844.4,250.65 L845.4,250.65 L846.4,250.65 L847.4,250.65 L848.4,250.65 L849.4,250.65 L850.4,250.65 L851.4,250.65 L852.4,250.65 L853.4,250.65 L854.4,250.65 L855.4,250.65 L856.4,250.65 L857.4,250.65 L858.4,250.65 L859.4,250.65 L860.4,250.65 L861.4,250.65 L862.4,250.65 L863.4,250.65 L864.4,250.65 L865.4,250.65 L866.4,250.65 L867.4,250.65 L868.4,250.65 L869.4,250.65 L870.4,250.65 L871.4,250.65 L872.4,250.65 L873.4,250.65 L874.4,250.65 L875.4,250.65 L876.4,250.65 L877.4,250.65 L878.4,250.65 L879.4,250.65 L880.4,250.65 L881.4,250.65 L882.4,250.65 L883.4,250.65 L884.4,250.65 L885.4,250.65 L886.4,250.65 L887.4,250.65 L888.4,250.65 L889.4,250.65 L890.4,250.65 L891.4,250.65 L892.4,250.65 L893.4,250.65 L894.4,250.65 L895.4,250.65 L896.4,250.65 L897.4,250.65 L898.4,250.65 L899.4,250.65 L900.4,250.65 L901.4,250.65 L902.4,250.65' fill='none' stroke='#1e1e1e' stroke-width='1.9' stroke-linejoin='round'/>
<line x1='158.7' y1='275.5' x2='350.4' y2='275.5' stroke='#ff00ff' stroke-width='2.1'/><circle cx='158.7' cy='275.5' r='2.6' fill='#b4c6de' stroke='#ff00ff' stroke-width='1.1'/><circle cx='350.4' cy='275.5' r='2.6' fill='#b4c6de' stroke='#ff00ff' stroke-width='1.1'/><circle cx='254.5' cy='275.5' r='4.3' fill='#ff00ff' stroke='#3a3ae6' stroke-width='0.95'/><line x1='74.2' y1='223.3' x2='232.9' y2='223.3' stroke='#bdb76b' stroke-width='2.1'/><circle cx='74.2' cy='223.3' r='2.6' fill='#b4c6de' stroke='#bdb76b' stroke-width='1.1'/><circle cx='232.9' cy='223.3' r='2.6' fill='#b4c6de' stroke='#bdb76b' stroke-width='1.1'/><circle cx='153.9' cy='223.3' r='4.3' fill='#bdb76b' stroke='#3a3ae6' stroke-width='0.95'/><line x1='116.8' y1='226.5' x2='180.5' y2='226.5' stroke='#ffd700' stroke-width='2.1'/><circle cx='116.8' cy='226.5' r='2.6' fill='#b4c6de' stroke='#ffd700' stroke-width='1.1'/><circle cx='180.5' cy='226.5' r='2.6' fill='#b4c6de' stroke='#ffd700' stroke-width='1.1'/><circle cx='148.5' cy='226.5' r='4.3' fill='#ffd700' stroke='#3a3ae6' stroke-width='0.95'/><line x1='134.4' y1='255.6' x2='304.5' y2='255.6' stroke='#0000ff' stroke-width='2.1'/><circle cx='134.4' cy='255.6' r='2.6' fill='#b4c6de' stroke='#0000ff' stroke-width='1.1'/><circle cx='304.5' cy='255.6' r='2.6' fill='#b4c6de' stroke='#0000ff' stroke-width='1.1'/><circle cx='219.6' cy='255.6' r='4.3' fill='#0000ff' stroke='#3a3ae6' stroke-width='0.95'/><line x1='291.2' y1='259.6' x2='422.2' y2='259.6' stroke='#e9967a' stroke-width='2.1'/><circle cx='291.2' cy='259.6' r='2.6' fill='#b4c6de' stroke='#e9967a' stroke-width='1.1'/><circle cx='422.2' cy='259.6' r='2.6' fill='#b4c6de' stroke='#e9967a' stroke-width='1.1'/><circle cx='356.7' cy='259.6' r='4.3' fill='#e9967a' stroke='#3a3ae6' stroke-width='0.95'/>
<rect x='41.65' y='148.6' width='860' height='202.7' fill='none' stroke='#687a91' stroke-width='2.1'/>
</svg>
<div class='abs' style='left:21px;top:390px;width:590px;height:126px;background:#e4e4e4'></div><div class='abs' style='left:25px;top:391px;width:17px;height:24px;background:#ffffff'></div><div class='abs' style='left:70.0px;top:394px;width:36px;height:14px;background:#ffffe1;border:1px solid #dbdbdb'></div><div class='abs' style='left:136.0px;top:394px;width:36px;height:14px;background:#ffffe1;border:1px solid #dbdbdb'></div><div class='abs' style='left:202.0px;top:394px;width:36px;height:14px;background:#ffffe1;border:1px solid #dbdbdb'></div><div class='abs' style='left:268.0px;top:394px;width:36px;height:14px;background:#ffffe1;border:1px solid #dbdbdb'></div><div class='abs' style='left:313px;top:394px;width:142px;height:18px;background:#fff;border:1px solid #6f6f6f'></div><svg class='abs' style='left:443px;top:402px' width='10' height='6' viewBox='0 0 10 6'><path d='M1 0.8 L4.9 4.6 L8.8 0.8' fill='none' stroke='#3c3c3c' stroke-width='1.1'/></svg><div class='abs' style='left:464px;top:396px;width:11px;height:11px;background:#fff;border:1px solid #333'></div><div class='abs' style='left:500px;top:396px;width:11px;height:11px;background:#fff;border:1px solid #333'></div><div class='abs' style='left:566px;top:398px;width:10px;height:10px;background:#ff00ff'></div><div class='abs' style='left:25px;top:416px;width:17px;height:24px;background:#ffffff'></div><div class='abs' style='left:70.0px;top:419px;width:36px;height:14px;background:#ffffe1;border:1px solid #dbdbdb'></div><div class='abs' style='left:136.0px;top:419px;width:36px;height:14px;background:#ffffe1;border:1px solid #dbdbdb'></div><div class='abs' style='left:202.0px;top:419px;width:36px;height:14px;background:#ffffe1;border:1px solid #dbdbdb'></div><div class='abs' style='left:268.0px;top:419px;width:36px;height:14px;background:#ffffe1;border:1px solid #dbdbdb'></div><div class='abs' style='left:313px;top:419px;width:142px;height:18px;background:#fff;border:1px solid #6f6f6f'></div><svg class='abs' style='left:443px;top:427px' width='10' height='6' viewBox='0 0 10 6'><path d='M1 0.8 L4.9 4.6 L8.8 0.8' fill='none' stroke='#3c3c3c' stroke-width='1.1'/></svg><div class='abs' style='left:464px;top:421px;width:11px;height:11px;background:#fff;border:1px solid #333'></div><div class='abs' style='left:500px;top:421px;width:11px;height:11px;background:#fff;border:1px solid #333'></div><div class='abs' style='left:566px;top:423px;width:10px;height:10px;background:#bdb76b'></div><div class='abs' style='left:25px;top:441px;width:17px;height:24px;background:#ffffff'></div><div class='abs' style='left:70.0px;top:444px;width:36px;height:14px;background:#ffffe1;border:1px solid #dbdbdb'></div><div class='abs' style='left:136.0px;top:444px;width:36px;height:14px;background:#ffffe1;border:1px solid #dbdbdb'></div><div class='abs' style='left:202.0px;top:444px;width:36px;height:14px;background:#ffffe1;border:1px solid #dbdbdb'></div><div class='abs' style='left:268.0px;top:444px;width:36px;height:14px;background:#ffffe1;border:1px solid #dbdbdb'></div><div class='abs' style='left:313px;top:444px;width:142px;height:18px;background:#fff;border:1px solid #6f6f6f'></div><svg class='abs' style='left:443px;top:452px' width='10' height='6' viewBox='0 0 10 6'><path d='M1 0.8 L4.9 4.6 L8.8 0.8' fill='none' stroke='#3c3c3c' stroke-width='1.1'/></svg><div class='abs' style='left:464px;top:446px;width:11px;height:11px;background:#fff;border:1px solid #333'></div><div class='abs' style='left:500px;top:446px;width:11px;height:11px;background:#fff;border:1px solid #333'></div><div class='abs' style='left:566px;top:448px;width:10px;height:10px;background:#ffd700'></div><div class='abs' style='left:25px;top:466px;width:17px;height:24px;background:#ffffff'></div><div class='abs' style='left:70.0px;top:469px;width:36px;height:14px;background:#ffffe1;border:1px solid #dbdbdb'></div><div class='abs' style='left:136.0px;top:469px;width:36px;height:14px;background:#ffffe1;border:1px solid #dbdbdb'></div><div class='abs' style='left:202.0px;top:469px;width:36px;height:14px;background:#ffffe1;border:1px solid #dbdbdb'></div><div class='abs' style='left:268.0px;top:469px;width:36px;height:14px;background:#ffffe1;border:1px solid #dbdbdb'></div><div class='abs' style='left:313px;top:469px;width:142px;height:18px;background:#fff;border:1px solid #6f6f6f'></div><svg class='abs' style='left:443px;top:477px' width='10' height='6' viewBox='0 0 10 6'><path d='M1 0.8 L4.9 4.6 L8.8 0.8' fill='none' stroke='#3c3c3c' stroke-width='1.1'/></svg><div class='abs' style='left:464px;top:471px;width:11px;height:11px;background:#fff;border:1px solid #333'></div><div class='abs' style='left:500px;top:471px;width:11px;height:11px;background:#fff;border:1px solid #333'></div><div class='abs' style='left:566px;top:473px;width:10px;height:10px;background:#0000ff'></div><div class='abs' style='left:25px;top:491px;width:17px;height:24px;background:#d4d4d4'></div><div class='abs' style='left:70.0px;top:494px;width:36px;height:14px;background:#ffffe1;border:1px solid #dbdbdb'></div><div class='abs' style='left:136.0px;top:494px;width:36px;height:14px;background:#ffffe1;border:1px solid #dbdbdb'></div><div class='abs' style='left:202.0px;top:494px;width:36px;height:14px;background:#ffffe1;border:1px solid #dbdbdb'></div><div class='abs' style='left:268.0px;top:494px;width:36px;height:14px;background:#ffffe1;border:1px solid #dbdbdb'></div><div class='abs' style='left:313px;top:494px;width:142px;height:18px;background:#fff;border:1px solid #6f6f6f'></div><svg class='abs' style='left:443px;top:502px' width='10' height='6' viewBox='0 0 10 6'><path d='M1 0.8 L4.9 4.6 L8.8 0.8' fill='none' stroke='#3c3c3c' stroke-width='1.1'/></svg><div class='abs' style='left:464px;top:496px;width:11px;height:11px;background:#fff;border:1px solid #333'></div><div class='abs' style='left:500px;top:496px;width:11px;height:11px;background:#fff;border:1px solid #333'></div><div class='abs' style='left:566px;top:498px;width:10px;height:10px;background:#e9967a'></div><div class='abs' style='left:21px;top:390px;width:1px;height:126px;background:#a6a6a6'></div><div class='abs' style='left:45px;top:390px;width:1px;height:126px;background:#a6a6a6'></div><div class='abs' style='left:111px;top:390px;width:1px;height:126px;background:#a6a6a6'></div><div class='abs' style='left:177px;top:390px;width:1px;height:126px;background:#a6a6a6'></div><div class='abs' style='left:243px;top:390px;width:1px;height:126px;background:#a6a6a6'></div><div class='abs' style='left:309px;top:390px;width:1px;height:126px;background:#a6a6a6'></div><div class='abs' style='left:460px;top:390px;width:1px;height:126px;background:#a6a6a6'></div><div class='abs' style='left:496px;top:390px;width:1px;height:126px;background:#a6a6a6'></div><div class='abs' style='left:532px;top:390px;width:1px;height:126px;background:#a6a6a6'></div><div class='abs' style='left:610px;top:390px;width:1px;height:126px;background:#a6a6a6'></div><div class='abs' style='left:21px;top:390px;width:590px;height:1px;background:#a6a6a6'></div><div class='abs' style='left:21px;top:415px;width:590px;height:1px;background:#a6a6a6'></div><div class='abs' style='left:21px;top:440px;width:590px;height:1px;background:#a6a6a6'></div><div class='abs' style='left:21px;top:465px;width:590px;height:1px;background:#a6a6a6'></div><div class='abs' style='left:21px;top:490px;width:590px;height:1px;background:#a6a6a6'></div><div class='abs' style='left:21px;top:515px;width:590px;height:1px;background:#a6a6a6'></div>
<svg class='abs' style='left:0;top:0' width='946' height='698' viewBox='0 0 946 698'><use href='#spin' transform='translate(59.45,403.50)'/><use href='#spin' transform='translate(125.45,403.50)'/><use href='#spin' transform='translate(191.45,403.50)'/><use href='#spin' transform='translate(257.45,403.50)'/><use href='#spin' transform='translate(59.45,428.50)'/><use href='#spin' transform='translate(125.45,428.50)'/><use href='#spin' transform='translate(191.45,428.50)'/><use href='#spin' transform='translate(257.45,428.50)'/><use href='#spin' transform='translate(59.45,453.50)'/><use href='#spin' transform='translate(125.45,453.50)'/><use href='#spin' transform='translate(191.45,453.50)'/><use href='#spin' transform='translate(257.45,453.50)'/><use href='#spin' transform='translate(59.45,478.50)'/><use href='#spin' transform='translate(125.45,478.50)'/><use href='#spin' transform='translate(191.45,478.50)'/><use href='#spin' transform='translate(257.45,478.50)'/><use href='#spin' transform='translate(59.45,503.50)'/><use href='#spin' transform='translate(125.45,503.50)'/><use href='#spin' transform='translate(191.45,503.50)'/><use href='#spin' transform='translate(257.45,503.50)'/></svg>
<!-- bottom -->
<div class='abs' style='left:12px;top:539px;width:11px;height:11px;background:#fff;border:1px solid #333'></div><div class='abs' style='left:157px;top:539px;width:11px;height:11px;background:#fff;border:1px solid #333'></div><div class='abs' style='left:262px;top:539px;width:11px;height:11px;background:#fff;border:1px solid #333'></div><div class='abs' style='left:461px;top:539px;width:11px;height:11px;background:#fff;border:1px solid #333'></div>
<div class='abs' style='left:718px;top:535px;width:89px;height:19px;background:#e1e1e1;border:1px solid #adadad'></div>
<!-- status bar -->
<div class='abs' style='left:2px;top:672px;width:943px;height:1px;background:#d7d7d7'></div>
<div class='abs' style='left:945px;top:672px;width:1px;height:22px;background:#fdfdfd'></div>
<svg class='abs' style='left:932px;top:680px' width='13' height='13' viewBox='0 0 13 13'>
<g fill='#fff'><rect x='10' y='2' width='2' height='2'/><rect x='6' y='6' width='2' height='2'/><rect x='10' y='6' width='2' height='2'/><rect x='2' y='10' width='2' height='2'/><rect x='6' y='10' width='2' height='2'/><rect x='10' y='10' width='2' height='2'/></g>
<g fill='#8e8e8e'><rect x='9' y='1' width='2' height='2'/><rect x='5' y='5' width='2' height='2'/><rect x='9' y='5' width='2' height='2'/><rect x='1' y='9' width='2' height='2'/><rect x='5' y='9' width='2' height='2'/><rect x='9' y='9' width='2' height='2'/></g></svg>
<!-- texts -->
<div style='position:absolute;left:0;top:0;width:946px;height:698px;will-change:transform'><span class='t' style='left:9.08px;top:8.84px;font-size:12px;color:#fff;transform:scaleX(0.9736);'>Auto-EQ Filter Designer: Auto EQ1</span><span class='t' style='left:16.70px;top:35.88px;font-size:11.6px;color:#000;transform:scaleX(0.9904);'>File</span><span class='t' style='left:53.79px;top:35.88px;font-size:11.6px;color:#000;transform:scaleX(0.9980);'>Design</span><span class='t' style='left:108.53px;top:35.88px;font-size:11.6px;color:#000;transform:scaleX(1.0704);'>Help</span><span class='t' style='left:10.04px;top:57.84px;font-size:12px;color:#000;transform:scaleX(0.8996);'>Source Response</span><span class='t' style='left:117.24px;top:57.84px;font-size:12px;color:#000;transform:scaleX(0.9096);'>Target Response</span><span class='t' style='left:220.75px;top:57.84px;font-size:12px;color:#000;transform:scaleX(0.8936);'>Design Settings</span><span class='t' style='left:317.88px;top:58.64px;font-size:12px;color:#000;transform:scaleX(0.8583);'>Filters</span><span class='t' style='left:19.74px;top:87.01px;font-size:11.8px;color:#000;transform:scaleX(0.9257);'>Driver</span><span class='t' style='left:51.05px;top:112.11px;font-size:9.2px;color:#586b82;transform:scaleX(1.0134);'>Frequency</span><span class='t' style='left:267.26px;top:112.11px;font-size:9.2px;color:#586b82;transform:scaleX(0.9875);'>Magnitude</span><span class='t' style='left:76.76px;top:127.21px;font-size:9.2px;color:#586b82;transform:scaleX(0.9982);'>Min</span><span class='t' style='left:167.34px;top:127.21px;font-size:9.2px;color:#586b82;transform:scaleX(1.0267);'>Max</span><span class='t' style='left:287.05px;top:127.21px;font-size:9.2px;color:#586b82;transform:scaleX(1.0130);'>Min</span><span class='t' style='left:384.03px;top:127.21px;font-size:9.2px;color:#586b82;transform:scaleX(1.0391);'>Max</span><span class='t' style='left:104.34px;top:125.23px;font-size:10px;color:#586b82;transform:scaleX(0.9460);'>20</span><span class='t' style='left:196.36px;top:125.23px;font-size:10px;color:#586b82;transform:scaleX(0.9124);'>20000</span><span class='t' style='left:313.24px;top:125.23px;font-size:10px;color:#586b82;transform:scaleX(0.9423);'>-20</span><span class='t' style='left:415.34px;top:125.23px;font-size:10px;color:#586b82;transform:scaleX(0.9460);'>20</span><span class='t' style='left:525.14px;top:127.41px;font-size:11.8px;color:#717e8e;transform:scaleX(0.9236);'>Add Filter</span><span class='t' style='left:623.55px;top:127.41px;font-size:11.8px;color:#717e8e;transform:scaleX(0.9071);'>Remove Filter</span><span class='t' style='left:25.13px;top:378.71px;font-size:9.2px;color:#586b82;transform:scaleX(1.0453);'>Filter</span><span class='t' style='left:63.15px;top:378.71px;font-size:9.2px;color:#586b82;transform:scaleX(1.0076);'>Frequency1</span><span class='t' style='left:130.04px;top:378.71px;font-size:9.2px;color:#586b82;transform:scaleX(1.0243);'>Q Factor</span><span class='t' style='left:197.06px;top:378.71px;font-size:9.2px;color:#586b82;transform:scaleX(0.9995);'>Boost</span><span class='t' style='left:263.09px;top:378.71px;font-size:9.2px;color:#586b82;transform:scaleX(0.9430);'>Gain</span><span class='t' style='left:341.62px;top:378.71px;font-size:9.2px;color:#586b82;transform:scaleX(1.0518);'>Type</span><span class='t' style='left:464.05px;top:377.71px;font-size:9.2px;color:#586b82;transform:scaleX(1.0129);'>View</span><span class='t' style='left:498.93px;top:377.71px;font-size:9.2px;color:#586b82;transform:scaleX(1.0328);'>Bypass</span><span class='t' style='left:535.14px;top:378.71px;font-size:9.2px;color:#586b82;transform:scaleX(1.0299);'>Color</span><span class='t' style='left:29.05px;top:538.84px;font-size:12px;color:#000;transform:scaleX(0.8934);'>Show Crossover Effects</span><span class='t' style='left:173.74px;top:538.84px;font-size:12px;color:#000;transform:scaleX(0.9010);'>Overlay Source</span><span class='t' style='left:279.05px;top:538.84px;font-size:12px;color:#000;transform:scaleX(0.8900);'>Overlay Electro-Acoustic Response</span><span class='t' style='left:477.23px;top:538.84px;font-size:12px;color:#000;transform:scaleX(0.9194);'>Overlay Target</span><span class='t' style='left:729.76px;top:538.84px;font-size:12px;color:#000;transform:scaleX(0.8841);'>Export Results</span><span class='t' style='left:24.59px;top:144.87px;font-size:10.9px;color:#586b82;transform:scaleX(1.0567);'>20</span><span class='t' style='left:25.24px;top:195.37px;font-size:10.9px;color:#586b82;transform:scaleX(1.0001);'>10</span><span class='t' style='left:30.41px;top:245.87px;font-size:10.9px;color:#586b82;transform:scaleX(1.1683);'>0</span><span class='t' style='left:20.58px;top:296.37px;font-size:10.9px;color:#586b82;transform:scaleX(1.0686);'>-10</span><span class='t' style='left:20.58px;top:347.57px;font-size:10.9px;color:#586b82;transform:scaleX(1.0686);'>-20</span><span class='t' style='left:34.47px;top:358.77px;font-size:10.9px;color:#586b82;transform:scaleX(1.0284);'>20</span><span class='t' style='left:231.84px;top:358.77px;font-size:10.9px;color:#586b82;transform:scaleX(1.0633);'>100</span><span class='t' style='left:514.43px;top:358.77px;font-size:10.9px;color:#586b82;transform:scaleX(1.0789);'>1000</span><span class='t' style='left:797.02px;top:358.77px;font-size:10.9px;color:#586b82;transform:scaleX(1.0879);'>10000</span><span class='t' style='left:29.94px;top:397.16px;font-size:12.8px;color:#586b82;transform:scaleX(0.8600);'>1</span><span class='t' style='left:77.20px;top:398.17px;font-size:9.6px;color:#586b82;transform:scaleX(0.9700);'>110.2</span><span class='t' style='left:145.44px;top:398.17px;font-size:9.6px;color:#586b82;transform:scaleX(0.9700);'>1.07</span><span class='t' style='left:209.89px;top:398.17px;font-size:9.6px;color:#586b82;transform:scaleX(0.9700);'>-5.03</span><span class='t' style='left:283.91px;top:398.17px;font-size:9.6px;color:#586b82;transform:scaleX(0.9700);'>0</span><span class='t' style='left:315.84px;top:397.84px;font-size:9.4px;color:#586b82;transform:scaleX(1.0051);'>Peaking Filter</span><span class='t' style='left:29.94px;top:422.16px;font-size:12.8px;color:#586b82;transform:scaleX(0.8600);'>2</span><span class='t' style='left:79.44px;top:423.17px;font-size:9.6px;color:#586b82;transform:scaleX(0.9700);'>48.9</span><span class='t' style='left:145.44px;top:423.17px;font-size:9.6px;color:#586b82;transform:scaleX(0.9700);'>3.54</span><span class='t' style='left:211.44px;top:423.17px;font-size:9.6px;color:#586b82;transform:scaleX(0.9700);'>5.26</span><span class='t' style='left:283.91px;top:423.17px;font-size:9.6px;color:#586b82;transform:scaleX(0.9700);'>0</span><span class='t' style='left:315.84px;top:422.84px;font-size:9.4px;color:#586b82;transform:scaleX(1.0051);'>Peaking Filter</span><span class='t' style='left:29.94px;top:447.16px;font-size:12.8px;color:#586b82;transform:scaleX(0.8600);'>3</span><span class='t' style='left:83.32px;top:448.17px;font-size:9.6px;color:#586b82;transform:scaleX(0.9700);'>47</span><span class='t' style='left:142.85px;top:448.17px;font-size:9.6px;color:#586b82;transform:scaleX(0.9700);'>10.67</span><span class='t' style='left:211.44px;top:448.17px;font-size:9.6px;color:#586b82;transform:scaleX(0.9700);'>4.72</span><span class='t' style='left:283.91px;top:448.17px;font-size:9.6px;color:#586b82;transform:scaleX(0.9700);'>0</span><span class='t' style='left:315.84px;top:447.84px;font-size:9.4px;color:#586b82;transform:scaleX(1.0051);'>Peaking Filter</span><span class='t' style='left:29.94px;top:472.16px;font-size:12.8px;color:#586b82;transform:scaleX(0.8600);'>4</span><span class='t' style='left:79.44px;top:473.17px;font-size:9.6px;color:#586b82;transform:scaleX(0.9700);'>83.1</span><span class='t' style='left:145.44px;top:473.17px;font-size:9.6px;color:#586b82;transform:scaleX(0.9700);'>2.69</span><span class='t' style='left:209.89px;top:473.17px;font-size:9.6px;color:#586b82;transform:scaleX(0.9700);'>-0.93</span><span class='t' style='left:283.91px;top:473.17px;font-size:9.6px;color:#586b82;transform:scaleX(0.9700);'>0</span><span class='t' style='left:315.84px;top:472.84px;font-size:9.4px;color:#586b82;transform:scaleX(1.0051);'>Peaking Filter</span><span class='t' style='left:29.94px;top:497.16px;font-size:12.8px;color:#586b82;transform:scaleX(0.8600);'>5</span><span class='t' style='left:76.85px;top:498.17px;font-size:9.6px;color:#586b82;transform:scaleX(0.9700);'>250.1</span><span class='t' style='left:145.44px;top:498.17px;font-size:9.6px;color:#586b82;transform:scaleX(0.9700);'>5.66</span><span class='t' style='left:209.89px;top:498.17px;font-size:9.6px;color:#586b82;transform:scaleX(0.9700);'>-1.74</span><span class='t' style='left:283.91px;top:498.17px;font-size:9.6px;color:#586b82;transform:scaleX(0.9700);'>0</span><span class='t' style='left:315.84px;top:497.84px;font-size:9.4px;color:#586b82;transform:scaleX(1.0051);'>Peaking Filter</span></div>
</body></html>
